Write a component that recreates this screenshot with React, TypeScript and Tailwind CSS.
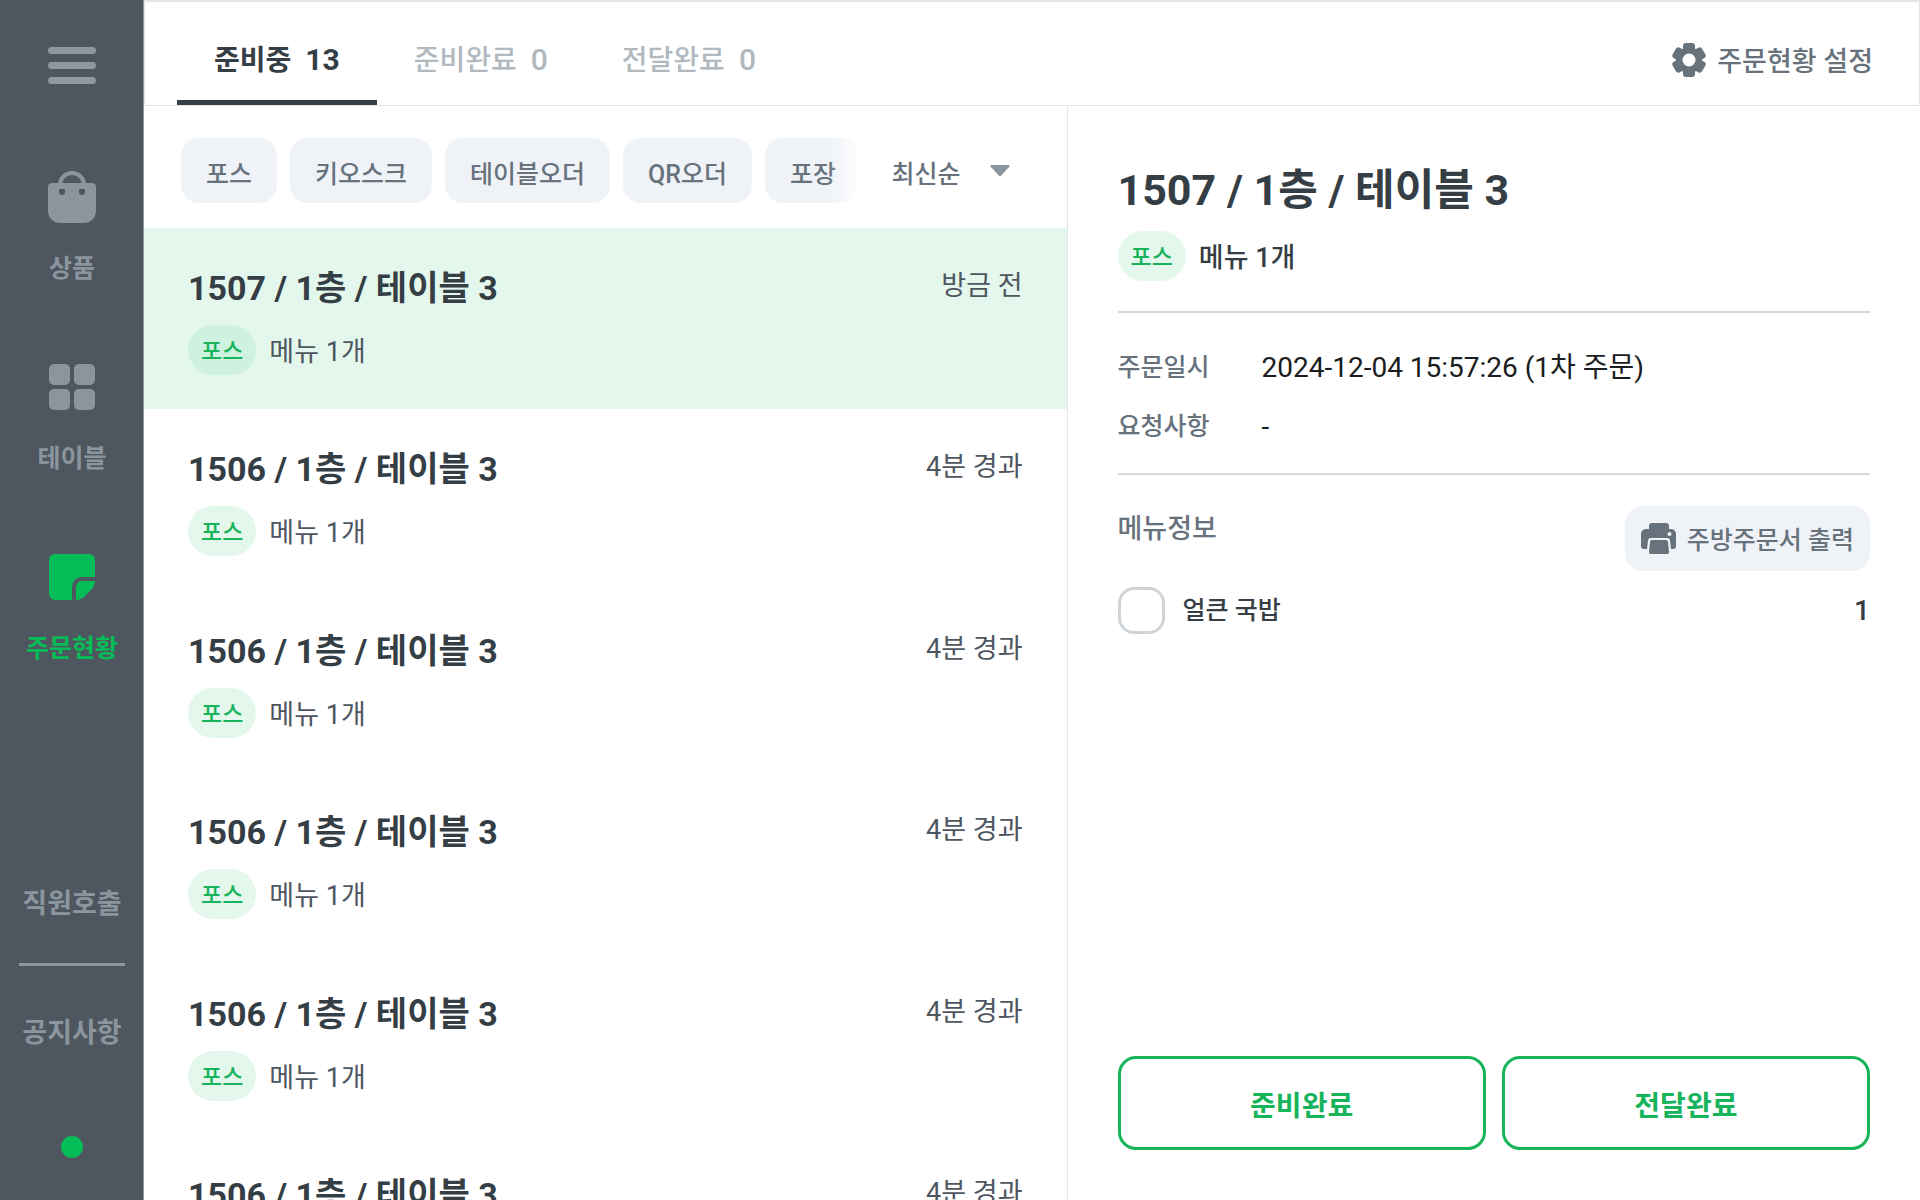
import React, { useState } from 'react';

interface Order {
  id: number;
  title: string;
  channel: string;
  menuCount: number;
  elapsed: string;
}

const TABS = [
  { name: '준비중', count: 13 },
  { name: '준비완료', count: 0 },
  { name: '전달완료', count: 0 },
];

const CHANNELS = ['포스', '키오스크', '테이블오더', 'QR오더', '포장'];

const ORDERS: Order[] = [
  { id: 1, title: '1507 / 1층 / 테이블 3', channel: '포스', menuCount: 1, elapsed: '방금 전' },
  { id: 2, title: '1506 / 1층 / 테이블 3', channel: '포스', menuCount: 1, elapsed: '4분 경과' },
  { id: 3, title: '1506 / 1층 / 테이블 3', channel: '포스', menuCount: 1, elapsed: '4분 경과' },
  { id: 4, title: '1506 / 1층 / 테이블 3', channel: '포스', menuCount: 1, elapsed: '4분 경과' },
  { id: 5, title: '1506 / 1층 / 테이블 3', channel: '포스', menuCount: 1, elapsed: '4분 경과' },
  { id: 6, title: '1506 / 1층 / 테이블 3', channel: '포스', menuCount: 1, elapsed: '4분 경과' },
];

const BagIcon = () => (
  <svg className="h-[52px] w-12" viewBox="0 0 48 52" aria-hidden="true">
    <path d="M12 14a12 12 0 0 1 24 0" fill="none" stroke="currentColor" strokeWidth="4" />
    <path
      fillRule="evenodd"
      fill="currentColor"
      d="M4 12h40a4 4 0 0 1 4 4v24a12 12 0 0 1-12 12H12A12 12 0 0 1 0 40V16a4 4 0 0 1 4-4zM11 18v3a3 3 0 0 0 6 0v-3zM31 18v3a3 3 0 0 0 6 0v-3z"
    />
  </svg>
);

const GridIcon = () => (
  <svg className="h-[46px] w-[46px]" viewBox="0 0 46 46" fill="currentColor" aria-hidden="true">
    <rect width="21" height="21" rx="5" />
    <rect x="25" width="21" height="21" rx="5" />
    <rect y="25" width="21" height="21" rx="5" />
    <rect x="25" y="25" width="21" height="21" rx="5" />
  </svg>
);

const NoteIcon = () => (
  <svg className="h-[46px] w-[46px]" viewBox="0 0 46 46" fill="currentColor" aria-hidden="true">
    <path d="M6 0h34a6 6 0 0 1 6 6v17H33a10 10 0 0 0-10 10v13H6a6 6 0 0 1-6-6V6a6 6 0 0 1 6-6z" />
    <path d="M46 27H33a6 6 0 0 0-6 6v13c4 0 7-2 9-4l6-6c2-2 4-5 4-9z" />
  </svg>
);

const GearIcon = () => (
  <svg className="h-9 w-9" viewBox="0 0 36 36" fill="currentColor" aria-hidden="true">
    <circle cx="18" cy="18" r="13" />
    <rect x="12" y="1" width="12" height="34" rx="3" />
    <rect x="12" y="1" width="12" height="34" rx="3" transform="rotate(60 18 18)" />
    <rect x="12" y="1" width="12" height="34" rx="3" transform="rotate(120 18 18)" />
    <circle cx="18" cy="18" r="6.5" fill="#fff" />
  </svg>
);

const PrinterIcon = () => (
  <svg className="h-8 w-9" viewBox="0 0 36 32" fill="currentColor" aria-hidden="true">
    <path
      fillRule="evenodd"
      d="M11 0h14a3 3 0 0 1 3 3v3h2a5 5 0 0 1 5 5v12a3 3 0 0 1-3 3h-2l-1-8a3 3 0 0 0-3-3H10a3 3 0 0 0-3 3l-1 8H3a3 3 0 0 1-3-3V11a5 5 0 0 1 5-5h3V3a3 3 0 0 1 3-3zm17.500 9a2 2 0 1 0 0 4 2 2 0 0 0 0-4z"
    />
    <path d="M11 17h14a2 2 0 0 1 2 2l1 10a2 2 0 0 1-2 2H10a2 2 0 0 1-2-2l1-10a2 2 0 0 1 2-2z" />
  </svg>
);

const NAV = [
  { name: '상품', icon: <BagIcon /> },
  { name: '테이블', icon: <GridIcon /> },
  { name: '주문현황', icon: <NoteIcon /> },
];

const ChannelTag: React.FC<{ name: string; selected?: boolean }> = ({ name, selected }) => (
  <span
    className={`flex h-[50px] items-center rounded-full px-[13px] pt-1 text-[23px] font-medium text-[#17b45c] ${
      selected ? 'bg-[#cff1df]' : 'bg-[#e3f7ec]'
    }`}
  >
    {name}
  </span>
);

const Sidebar: React.FC = () => {
  const [active, setActive] = useState('주문현황');

  return (
    <aside className="flex w-36 shrink-0 flex-col items-center border-r border-[#9097a1] bg-[#4e565f] pl-px text-[#8b959e]">
      <button type="button" aria-label="메뉴" className="mt-[47px] flex flex-col gap-2 text-[#9097a1]">
        <span className="h-[7px] w-12 rounded-full bg-current" />
        <span className="h-[7px] w-12 rounded-full bg-current" />
        <span className="h-[7px] w-12 rounded-full bg-current" />
      </button>
      <nav className="mt-[87px] flex flex-col gap-[74px]">
        {NAV.map((item) => (
          <button
            key={item.name}
            type="button"
            onClick={() => setActive(item.name)}
            className={`flex h-[116px] flex-col items-center justify-between text-[25px] leading-9 font-bold ${
              active === item.name ? 'text-[#05bd57]' : ''
            }`}
          >
            <span className="flex h-[52px] items-center">{item.icon}</span>
            {item.name}
          </button>
        ))}
      </nav>
      <div className="mt-auto flex flex-col items-center pb-[42px] text-[27px] leading-9 font-bold">
        <button type="button">직원호출</button>
        <hr className="mt-[41px] mb-[49px] w-[106px] border-t-[3px] border-[#8b959e]" />
        <button type="button">공지사항</button>
        <span className="mt-[85px] h-[22px] w-[22px] rounded-full bg-[#05bd57]" />
      </div>
    </aside>
  );
};

const App: React.FC = () => {
  const [tab, setTab] = useState('준비중');
  const [selectedId, setSelectedId] = useState(1);

  const selected = ORDERS.find((o) => o.id === selectedId) ?? ORDERS[0];

  return (
    <div className="flex h-screen overflow-hidden bg-white font-[Roboto,'Noto_Sans_CJK_KR',sans-serif] text-[#363e45]">
      <Sidebar />

      <div className="flex min-w-0 flex-1 flex-col">
        <header className="flex h-[106px] shrink-0 justify-between border border-t-2 border-[#e2e5ea] pr-[46px] pl-8">
          <div className="flex" role="tablist">
            {TABS.map((t) => (
              <button
                key={t.name}
                type="button"
                role="tab"
                aria-selected={tab === t.name}
                onClick={() => setTab(t.name)}
                className={`flex items-center border-b-[5px] px-[37px] pt-4 text-[28px] ${
                  tab === t.name ? 'border-[#363e45] font-bold' : 'border-transparent font-medium text-[#b1b8be]'
                }`}
              >
                <span className="flex items-baseline gap-3.5">
                  {t.name}
                  <span className="text-[30px]">{t.count}</span>
                </span>
              </button>
            ))}
          </div>
          <button type="button" className="flex items-center gap-2.5 pt-3 text-[27px] font-medium text-[#67727d]">
            <GearIcon />
            <span className="pt-1.5">주문현황 설정</span>
          </button>
        </header>

        <div className="flex min-h-0 flex-1">
          {/* 주문 목록 */}
          <section className="flex w-[52%] shrink-0 flex-col overflow-hidden border-r border-[#e2e5ea]">
            <div className="flex h-[122px] shrink-0 items-center justify-between pt-[7px] pr-[57px] pl-[37px] text-[25px] font-medium text-[#67727d]">
              <div className="relative flex gap-[13px]">
                {CHANNELS.map((c) => (
                  <button key={c} type="button" className="h-[65px] rounded-[18px] bg-[#eff3f7] px-[25px] pt-2">
                    {c}
                  </button>
                ))}
                <div className="absolute inset-y-0 right-0 w-8 bg-linear-to-r from-transparent to-white" />
              </div>
              <label className="relative flex items-center">
                <span className="sr-only">정렬</span>
                <select className="w-[118px] appearance-none bg-transparent pt-2">
                  <option>최신순</option>
                  <option>오래된순</option>
                </select>
                <svg className="pointer-events-none absolute right-0 h-[11px] w-5" viewBox="0 0 20 11" aria-hidden="true">
                  <path d="M1.500 0h17a1 1 0 0 1 1 1.600l-8 8.600a2 2 0 0 1-3 0l-8-8.600a1 1 0 0 1 1-1.600z" fill="#8b959e" />
                </svg>
              </label>
            </div>
            <ul>
              {ORDERS.map((o) => (
                <li key={o.id} className="border-white even:border-b">
                  <button
                    type="button"
                    onClick={() => setSelectedId(o.id)}
                    className={`flex w-full items-start justify-between px-11 pt-9 pb-[34px] text-left text-[27px] text-[#4e565f] ${
                      o.id === selectedId ? 'bg-[#e3f7ec]' : ''
                    }`}
                  >
                    <span className="flex flex-col gap-3">
                      <span className="text-[34px] leading-[49px] font-bold text-[#363e45]">{o.title}</span>
                      <span className="flex items-center gap-[13px]">
                        <ChannelTag name={o.channel} selected={o.id === selectedId} />
                        <span className="pt-1">메뉴 {o.menuCount}개</span>
                      </span>
                    </span>
                    <span className="leading-[45px]">{o.elapsed}</span>
                  </button>
                </li>
              ))}
            </ul>
          </section>

          {/* 주문 상세 */}
          <section className="flex min-w-0 flex-1 flex-col px-[50px] pb-[50px]">
            <h1 className="mt-[54px] text-[43px] leading-[60px] font-bold">{selected.title}</h1>
            <div className="mt-[11px] flex items-center gap-[13px] text-[27px] font-medium">
              <ChannelTag name={selected.channel} />
              <span className="pt-1">메뉴 {selected.menuCount}개</span>
            </div>

            <dl className="mt-[30px] grid grid-cols-[144px_1fr] gap-y-[19px] border-y-2 border-[#d6d9dd] pt-[35px] pb-[26px] text-[25px] leading-10">
              <dt className="font-medium text-[#67727d]">주문일시</dt>
              <dd className="text-[28px] text-[#1b1d20]">2024-12-04 15:57:26 (1차 주문)</dd>
              <dt className="font-medium text-[#67727d]">요청사항</dt>
              <dd className="text-[28px] text-[#1b1d20]">-</dd>
            </dl>

            <div className="mt-[31px] flex items-start justify-between font-medium text-[#67727d]">
              <h2 className="text-[27px] leading-[47px]">메뉴정보</h2>
              <button type="button" className="flex h-[65px] items-center gap-2.5 rounded-[18px] bg-[#eff3f7] px-4 text-[25px]">
                <PrinterIcon />
                <span className="pt-1">주방주문서 출력</span>
              </button>
            </div>

            <div className="mt-4 flex items-center justify-between text-[25px] font-medium">
              <label className="flex items-center gap-[18px]">
                <input type="checkbox" className="h-[47px] w-[47px] appearance-none rounded-2xl border-[3px] border-[#cfd4d9] checked:bg-[#05bd57]" />
                얼큰 국밥
              </label>
              <span className="text-[28px]">1</span>
            </div>

            <div className="mt-auto flex gap-4 text-[28px] font-bold text-[#17b45c]">
              <button type="button" className="h-[94px] flex-1 rounded-[18px] border-[3px] border-current pt-2">
                준비완료
              </button>
              <button type="button" className="h-[94px] flex-1 rounded-[18px] border-[3px] border-current pt-2">
                전달완료
              </button>
            </div>
          </section>
        </div>
      </div>
    </div>
  );
};

export default App;
